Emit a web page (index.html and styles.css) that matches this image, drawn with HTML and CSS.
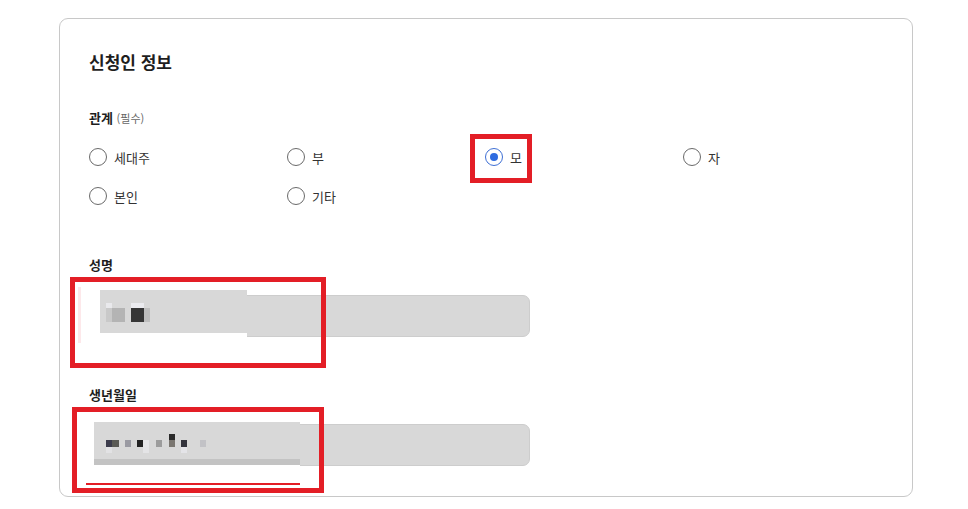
FILE: index.html
```html
<!DOCTYPE html>
<html lang="ko">
<head>
<meta charset="utf-8">
<link rel="stylesheet" href="styles.css">
</head>
<body>
<section class="card">
  <h2 class="title">신청인 정보</h2>
  <div class="field-label rel-label">관계 <span class="req">(필수)</span></div>
  <div class="radios">
    <label class="radio"><span class="dot"></span><span>세대주</span></label>
    <label class="radio"><span class="dot"></span><span>부</span></label>
    <label class="radio checked"><span class="dot"></span><span>모</span><span class="mark mark-radio"></span></label>
    <label class="radio"><span class="dot"></span><span>자</span></label>
    <label class="radio"><span class="dot"></span><span>본인</span></label>
    <label class="radio"><span class="dot"></span><span>기타</span></label>
  </div>

  <div class="field-label name-label">성명</div>
  <div class="input-wrap">
    <div class="input"></div>
    <div class="cover cover-name">
      <div class="patch patch-name">
        <i class="px" style="left:6px;top:13px;width:6px;height:5px;background:#e9e9ec"></i>
        <i class="px" style="left:12px;top:18px;width:13px;height:14px;background:#b4b4b4"></i>
        <i class="px" style="left:6px;top:18px;width:6px;height:14px;background:#c9c9c9"></i>
        <i class="px" style="left:31px;top:13px;width:13px;height:5px;background:#ebebef"></i>
        <i class="px" style="left:31px;top:18px;width:13px;height:14px;background:#363636"></i>
        <i class="px" style="left:44px;top:18px;width:6px;height:14px;background:#bdbdbd"></i>
      </div>
    </div>
    <span class="mark mark-name"></span>
  </div>

  <div class="field-label birth-label">생년월일</div>
  <div class="input-wrap">
    <div class="input"></div>
    <div class="cover cover-birth">
      <div class="patch patch-birth">
        <i class="px" style="left:12px;top:18px;width:6px;height:7px;background:#3c3c4c"></i>
        <i class="px" style="left:18px;top:18px;width:7px;height:7px;background:#5a5a55"></i>
        <i class="px" style="left:31px;top:18px;width:6px;height:7px;background:#9a9aa2"></i>
        <i class="px" style="left:43px;top:18px;width:6px;height:7px;background:#222"></i>
        <i class="px" style="left:49px;top:18px;width:6px;height:7px;background:#e6e6e8"></i>
        <i class="px" style="left:62px;top:18px;width:6px;height:7px;background:#9c9c9c"></i>
        <i class="px" style="left:75px;top:12px;width:6px;height:6px;background:#2a2a2a"></i>
        <i class="px" style="left:75px;top:18px;width:6px;height:7px;background:#7a7670"></i>
        <i class="px" style="left:87px;top:18px;width:6px;height:7px;background:#33333c"></i>
        <i class="px" style="left:106px;top:18px;width:6px;height:7px;background:#c2c2c6"></i>
        <i class="px" style="left:12px;top:25px;width:6px;height:6px;background:#e2e2e4"></i>
        <i class="px" style="left:49px;top:25px;width:6px;height:6px;background:#e4e4e6"></i>
        <i class="px" style="left:87px;top:25px;width:6px;height:6px;background:#e4e4e8"></i>
      </div>
      <div class="redline"></div>
    </div>
    <span class="mark mark-birth"></span>
  </div>
</section>
</body>
</html>
```

FILE: styles.css
```css
* { box-sizing: border-box; }
html, body { margin: 0; padding: 0; background: #fff; }
body {
  font-family: "Noto Sans CJK KR", "Noto Sans", sans-serif;
  color: #222;
  width: 968px;
  height: 509px;
  overflow: hidden;
}
.card {
  margin: 18px 0 0 59px;
  width: 854px;
  height: 479px;
  border: 1px solid #c8c8c8;
  border-radius: 9px;
  padding: 31px 29px 0 29px;
}
.title {
  margin: 0;
  font-size: 17px;
  line-height: 24px;
  font-weight: 700;
  color: #1e1e1e;
}
.field-label {
  font-size: 13px;
  line-height: 18px;
  font-weight: 700;
  color: #1e1e1e;
}
.req { font-size: 11px; font-weight: 400; color: #666; }
.rel-label { margin-top: 35px; }
.radios {
  margin-top: 20px;
  display: grid;
  grid-template-columns: repeat(4, 198px);
  row-gap: 19px;
}
.radio {
  position: relative;
  display: flex;
  align-items: center;
  gap: 7px;
  height: 20px;
  font-size: 13px;
  color: #333;
}
.dot {
  width: 18px;
  height: 18px;
  border: 1px solid #6a6a6a;
  border-radius: 50%;
  display: flex;
  align-items: center;
  justify-content: center;
  flex: none;
}
.checked .dot { border-color: #3e6fd4; }
.checked .dot::after {
  content: "";
  width: 8px;
  height: 8px;
  border-radius: 50%;
  background: #2f6ce0;
}
.mark {
  position: absolute;
  border: 5px solid #e31e26;
  pointer-events: none;
}
.mark-radio { left: -15px; top: -13px; width: 62px; height: 49px; }
.name-label { margin-top: 50px; }
.birth-label { margin-top: 49px; }
.input-wrap {
  position: relative;
  margin-top: 21px;
  width: 441px;
}
.birth-label + .input-wrap { margin-top: 20px; }
.input {
  height: 42px;
  background: #d8d8d8;
  border: 1px solid #cdcdcd;
  border-radius: 7px;
}
.cover {
  position: absolute;
  background: #fff;
}
.cover-name { left: -11px; top: -8px; width: 169px; height: 56px; border-left: 3px solid #fde8ea; }
.patch { position: absolute; background: #d8d8d8; }
.patch-name { left: 19px; top: 3px; width: 147px; height: 43px; }
.px { position: absolute; display: block; }
.mark-name { left: -19px; top: -18px; width: 256px; height: 91px; }
.cover-birth { left: -12px; top: -6px; width: 223px; height: 70px; }
.patch-birth {
  left: 17px; top: 4px; width: 206px; height: 43px;
  border-bottom: 6px solid #c3c3c3;
}
.redline {
  position: absolute;
  left: 9px; top: 65px; width: 214px; height: 1.5px;
  background: #e31e26;
}
.mark-birth { left: -17px; top: -17px; width: 252px; height: 86px; }
```
